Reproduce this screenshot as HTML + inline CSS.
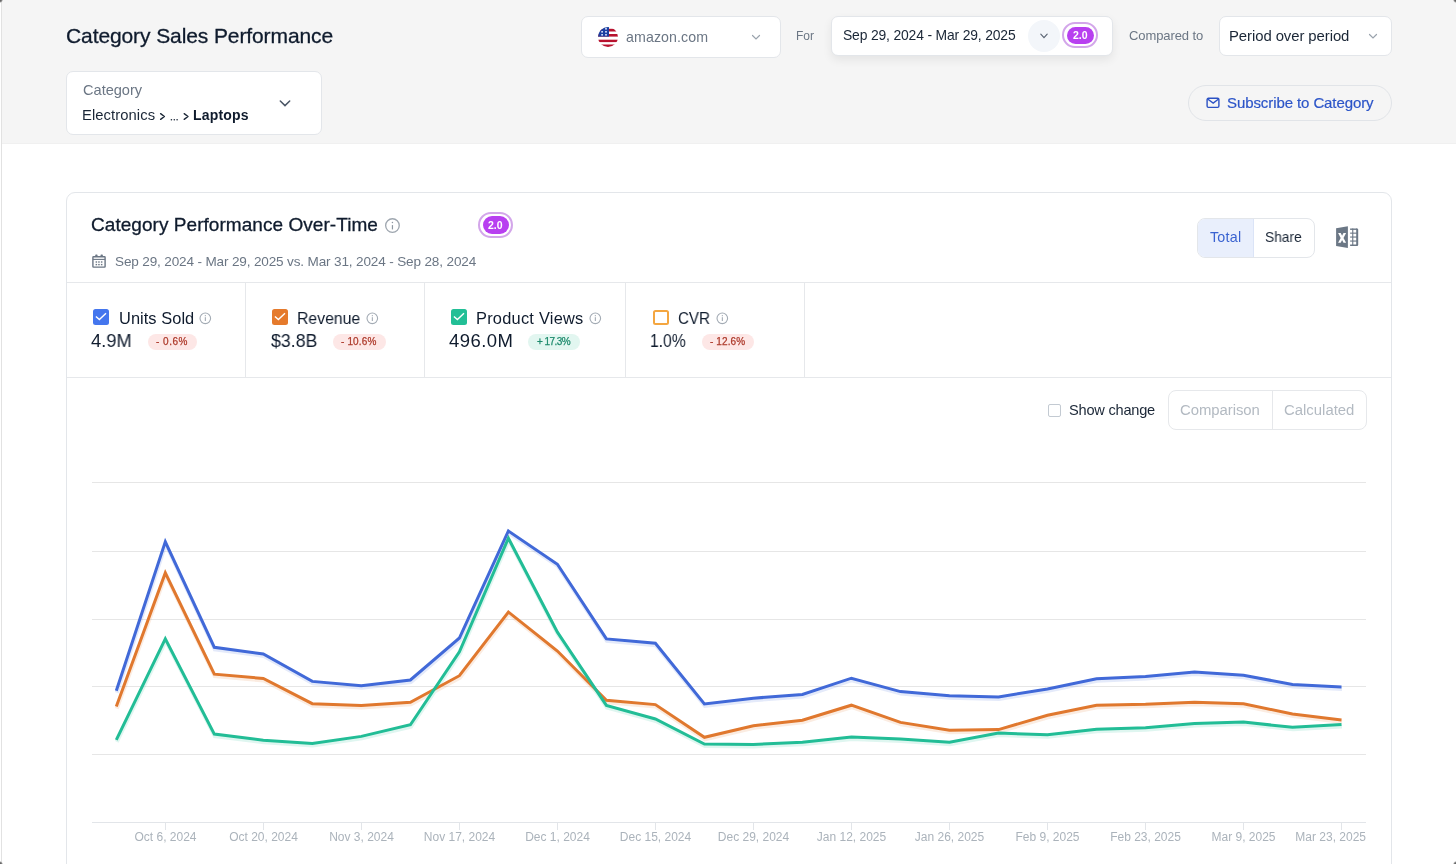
<!DOCTYPE html>
<html><head><meta charset="utf-8">
<style>
*{box-sizing:border-box;margin:0;padding:0}
html,body{width:1456px;height:864px;overflow:hidden;background:#fff}
body{font-family:"Liberation Sans",sans-serif;color:#0f1b2d;position:relative}
.a{position:absolute}
.t{position:absolute;line-height:1;white-space:nowrap;will-change:transform}
#lb{left:1px;top:0;width:1px;height:864px;background:#e2e2e2}
#hdr{left:2px;top:0;width:1454px;height:144px;background:#f5f5f5;border-bottom:1px solid #f0f0f0}
.box{position:absolute;background:#fff;border:1px solid #e3e6ea;border-radius:7px}
.g{color:#6b7684}
.chev{position:absolute}
</style></head>
<body>
<div class="a" id="hdr"></div>
<div class="a" id="lb"></div>

<!-- header title -->
<div class="t" style="left:65.6px;top:25.4px;font-size:21px;color:#0f1b2d;-webkit-text-stroke:0.3px #0f1b2d;letter-spacing:-0.1px">Category Sales Performance</div>

<!-- category dropdown -->
<div class="box" style="left:66px;top:71px;width:256px;height:64px"></div>
<div class="t g" style="left:82.50px;top:83.00px;font-size:14.6px;letter-spacing:-0.014px">Category</div>
<div class="t" style="left:82px;top:108px;font-size:14.8px;letter-spacing:0.07px;color:#1a2636">Electronics</div>
<svg class="a" style="left:150px;top:105px" width="50" height="20" viewBox="0 0 50 20"><path d="M10.6 8.6 L14.4 11.5 L10.6 14.4 M34.2 8.6 L38 11.5 L34.2 14.4" fill="none" stroke="#1a2636" stroke-width="1.35" stroke-linecap="round" stroke-linejoin="round"/><g fill="#1a2636"><circle cx="21.4" cy="14.7" r="0.8"/><circle cx="24.3" cy="14.7" r="0.8"/><circle cx="27.1" cy="14.7" r="0.8"/></g></svg>
<div class="t" style="left:193.2px;top:108px;font-size:14px;font-weight:bold;letter-spacing:0.18px;color:#0f1b2d">Laptops</div>
<svg class="a" style="left:278px;top:98px" width="14" height="10" viewBox="0 0 14 10"><path d="M2.3 3 L7 7.6 L11.7 3" fill="none" stroke="#4a5565" stroke-width="1.5" stroke-linecap="round"/></svg>

<!-- marketplace -->
<div class="box" style="left:581px;top:16px;width:200px;height:42px"></div>
<svg class="a" style="left:598px;top:27px" width="20" height="20" viewBox="0 0 20 20">
 <defs><clipPath id="fc"><circle cx="10" cy="10" r="10"/></clipPath></defs>
 <g clip-path="url(#fc)">
  <rect width="20" height="20" fill="#fff"/>
  <g fill="#b8122e">
  <rect y="1.8" width="20" height="2.7"/>
  <rect y="7" width="20" height="2.6"/>
  <rect y="12.7" width="20" height="2.4"/>
  <rect y="17.5" width="20" height="2.5"/>
  </g>
  <rect width="11" height="9.6" fill="#1b3fa0"/>
  <g fill="#dfe8ff"><rect x="3.3" y="4" width="1.6" height="1.6"/><rect x="7.2" y="4" width="1.6" height="1.6"/><rect x="3.3" y="7" width="1.6" height="1.6"/><rect x="7.2" y="7" width="1.6" height="1.6"/><rect x="7.2" y="1" width="1.6" height="1.6"/></g>
 </g>
</svg>
<div class="t g" style="left:625.80px;top:30.00px;font-size:14.2px;letter-spacing:0.100px">amazon.com</div>
<svg class="a" style="left:751px;top:33px" width="10" height="8" viewBox="0 0 10 8"><path d="M1.5 2.5 L5 6 L8.5 2.5" fill="none" stroke="#9aa3ad" stroke-width="1.2" stroke-linecap="round"/></svg>

<div class="t g" style="left:796.31px;top:30.00px;font-size:12px;transform:scaleX(0.9881);transform-origin:0 0">For</div>

<!-- date picker -->
<div class="box" style="left:831px;top:16px;width:282px;height:40px;box-shadow:0 4px 10px rgba(0,0,0,0.07)"></div>
<div class="t" style="left:843.20px;top:29.00px;font-size:13.9px;letter-spacing:-0.162px;color:#1a2636">Sep 29, 2024 - Mar 29, 2025</div>
<div class="a" style="left:1028px;top:20px;width:32px;height:32px;border-radius:50%;background:#f3f6fa"></div>
<svg class="a" style="left:1039px;top:32px" width="10" height="8" viewBox="0 0 10 8"><path d="M1.8 2.2 L5 5.6 L8.2 2.2" fill="none" stroke="#5b6573" stroke-width="1.15" stroke-linecap="round"/></svg>
<div class="a" style="left:1062px;top:22px;width:36px;height:26px;border-radius:13px;border:2px solid #d3a6ea"></div>
<div class="a" style="left:1067px;top:26.5px;width:26.5px;height:17.5px;border-radius:9px;background:#b83ff0"></div>
<div class="t" style="left:1072.5px;top:30px;font-size:10.5px;font-weight:bold;color:#fff">2.0</div>

<div class="t g" style="left:1128.60px;top:29.00px;font-size:13.0px;letter-spacing:-0.090px">Compared to</div>
<div class="box" style="left:1219px;top:16px;width:173px;height:40px"></div>
<div class="t" style="left:1229.00px;top:29.00px;font-size:14.9px;letter-spacing:-0.076px;color:#1a2636">Period over period</div>
<svg class="a" style="left:1368px;top:32px" width="10" height="8" viewBox="0 0 10 8"><path d="M1.5 2.5 L5 6 L8.5 2.5" fill="none" stroke="#9aa3ad" stroke-width="1.2" stroke-linecap="round"/></svg>

<!-- subscribe -->
<div class="a" style="left:1188px;top:85px;width:204px;height:36px;border-radius:18px;border:1px solid #e1e4e8"></div>
<svg class="a" style="left:1206px;top:97px" width="14" height="12" viewBox="0 0 14 12"><rect x="1.1" y="1.3" width="11.8" height="9.1" rx="1.3" fill="none" stroke="#2c52c4" stroke-width="1.4"/><path d="M1.6 2 L7.2 6.1 L12.6 2" fill="none" stroke="#2c52c4" stroke-width="1.3"/></svg>
<div class="t" style="left:1227px;top:94.6px;font-size:15px;color:#2c55c8;-webkit-text-stroke:0.2px #2c55c8;letter-spacing:-0.09px">Subscribe to Category</div>

<!-- card -->
<div class="box" style="left:66px;top:192px;width:1326px;height:700px;border-radius:9px"></div>
<div class="t" style="left:91px;top:215.2px;font-size:19px;color:#0f1b2d;-webkit-text-stroke:0.3px #0f1b2d;letter-spacing:0.05px">Category Performance Over-Time</div>
<svg class="a" style="left:385px;top:218px" width="15" height="16" viewBox="0 0 15 16"><circle cx="7.45" cy="7.55" r="6.8" fill="none" stroke="#9ea6af" stroke-width="1.3"/><rect x="6.85" y="7.1" width="1.2" height="4.3" fill="#8f98a2"/><circle cx="7.45" cy="4.6" r="0.75" fill="#8f98a2"/></svg>
<div class="a" style="left:478px;top:211.5px;width:35px;height:26px;border-radius:13px;border:2px solid #d3a6ea"></div>
<div class="a" style="left:482.5px;top:216.3px;width:26.5px;height:17.3px;border-radius:9px;background:#b83ff0"></div>
<div class="t" style="left:488px;top:219.8px;font-size:10.5px;font-weight:bold;color:#fff">2.0</div>

<svg class="a" style="left:88px;top:250px" width="22" height="22" viewBox="0 0 22 22"><g fill="#6b7684"><rect x="7.2" y="4.6" width="2.4" height="2.4" rx="0.8"/><rect x="12.5" y="4.6" width="2.4" height="2.4" rx="0.8"/><rect x="7.6" y="11.3" width="1.5" height="1.4"/><rect x="10.2" y="11.3" width="1.5" height="1.4"/><rect x="12.9" y="11.3" width="1.5" height="1.4"/><rect x="7.6" y="13.9" width="1.5" height="1.4"/><rect x="10.2" y="13.9" width="1.5" height="1.4"/><rect x="12.9" y="13.9" width="1.5" height="1.4"/></g><rect x="4.9" y="6.8" width="12.2" height="10.3" rx="0.6" fill="none" stroke="#6b7684" stroke-width="1.4"/><line x1="4.9" y1="9.4" x2="17.1" y2="9.4" stroke="#6b7684" stroke-width="1.1"/></svg>
<div class="t g" style="left:114.60px;top:255.00px;font-size:13.55px;letter-spacing:-0.148px">Sep 29, 2024 - Mar 29, 2025 vs. Mar 31, 2024 - Sep 28, 2024</div>

<!-- toggle total/share -->
<div class="a" style="left:1197px;top:218px;width:118px;height:40px;border-radius:8px;border:1px solid #e3e6ea;overflow:hidden;background:#fff">
  <div class="a" style="left:0;top:0;width:56px;height:38px;background:#e9effc;border-right:1px solid #dbe4f7"></div>
</div>
<div class="t" style="left:1209.90px;top:230.00px;font-size:14.3px;letter-spacing:0.225px;color:#3a63d1">Total</div>
<div class="t" style="left:1265.12px;top:230.00px;font-size:14.2px;transform:scaleX(0.9700);transform-origin:0 0;color:#1a2636">Share</div>
<svg class="a" style="left:1330px;top:220px" width="34" height="34" viewBox="0 0 34 34"><path d="M6.1 8.3 L17.9 6.3 L17.9 28.1 L6.1 26 Z" fill="#6b7785"/><path d="M8.1 13 L10.7 13 L12.1 15.8 L13.5 13 L16.1 13 L13.5 17.9 L16.1 22.8 L13.5 22.8 L12.1 20 L10.7 22.8 L8.1 22.8 L10.7 17.9 Z" fill="#fff"/><g fill="#6b7785"><rect x="20.1" y="8.5" width="7" height="1.4"/><rect x="20.1" y="12.6" width="7" height="1.1"/><rect x="20.1" y="16.5" width="7" height="1.1"/><rect x="20.1" y="20.5" width="7" height="1.1"/><rect x="20.1" y="24.5" width="7" height="1.5"/><rect x="22.2" y="8.5" width="1.1" height="17.5"/><path d="M26.2 8.5 L27 8.5 Q28.2 8.5 28.2 9.7 L28.2 24.8 Q28.2 26 27 26 L26.2 26 Z"/></g></svg>

<!-- metrics row lines -->
<div class="a" style="left:67px;top:282px;width:1324px;height:1px;background:#e6e8eb"></div>
<div class="a" style="left:67px;top:377px;width:1324px;height:1px;background:#e6e8eb"></div>
<div class="a" style="left:245px;top:283px;width:1px;height:94px;background:#e6e8eb"></div>
<div class="a" style="left:424px;top:283px;width:1px;height:94px;background:#e6e8eb"></div>
<div class="a" style="left:625px;top:283px;width:1px;height:94px;background:#e6e8eb"></div>
<div class="a" style="left:804px;top:283px;width:1px;height:94px;background:#e6e8eb"></div>

<!-- metric 1 -->
<div class="a" style="left:93px;top:309px;width:16px;height:16px;border-radius:2.5px;background:#4476ee"></div>
<svg class="a" style="left:93px;top:309px" width="16" height="16" viewBox="0 0 16 16"><path d="M2.9 7.4 L6.4 10.6 L13 4.3" fill="none" stroke="#fff" stroke-width="1.4"/></svg>
<div class="t" style="left:118.50px;top:310.00px;font-size:16.4px;letter-spacing:0.056px">Units Sold</div>
<svg class="a" style="left:199px;top:312px" width="13" height="13" viewBox="0 0 13 13"><circle cx="6.3" cy="6.3" r="5.3" fill="none" stroke="#a3abb4" stroke-width="1.1"/><rect x="5.8" y="5.2" width="1.1" height="3.8" fill="#a3abb4"/><circle cx="6.35" cy="3.7" r="0.65" fill="#a3abb4"/></svg>
<div class="t" style="left:91.31px;top:332.00px;font-size:18.5px;transform:scaleX(0.9872);transform-origin:0 0">4.9M</div>
<div class="a" style="left:148px;top:334px;width:49px;height:16px;border-radius:8px;background:#fde7e6"></div>
<div class="t" style="left:155.9px;top:337.4px;font-size:10px;-webkit-text-stroke:0.25px #ad3a2b;letter-spacing:0.5px;color:#ad3a2b">- 0.6%</div>

<!-- metric 2 -->
<div class="a" style="left:272px;top:309px;width:16px;height:16px;border-radius:2.5px;background:#e57a2c"></div>
<svg class="a" style="left:272px;top:309px" width="16" height="16" viewBox="0 0 16 16"><path d="M2.9 7.4 L6.4 10.6 L13 4.3" fill="none" stroke="#fff" stroke-width="1.4"/></svg>
<div class="t" style="left:297.35px;top:310.00px;font-size:16.4px;transform:scaleX(0.9623);transform-origin:0 0">Revenue</div>
<svg class="a" style="left:366px;top:312px" width="13" height="13" viewBox="0 0 13 13"><circle cx="6.3" cy="6.3" r="5.3" fill="none" stroke="#a3abb4" stroke-width="1.1"/><rect x="5.8" y="5.2" width="1.1" height="3.8" fill="#a3abb4"/><circle cx="6.35" cy="3.7" r="0.65" fill="#a3abb4"/></svg>
<div class="t" style="left:270.51px;top:332.00px;font-size:18.5px;transform:scaleX(0.9597);transform-origin:0 0">$3.8B</div>
<div class="a" style="left:332.7px;top:334px;width:53px;height:16px;border-radius:8px;background:#fde7e6"></div>
<div class="t" style="left:341.2px;top:337.4px;font-size:10px;-webkit-text-stroke:0.25px #ad3a2b;letter-spacing:0.15px;color:#ad3a2b">- 10.6%</div>

<!-- metric 3 -->
<div class="a" style="left:451px;top:309px;width:16px;height:16px;border-radius:2.5px;background:#22bf96"></div>
<svg class="a" style="left:451px;top:309px" width="16" height="16" viewBox="0 0 16 16"><path d="M2.9 7.4 L6.4 10.6 L13 4.3" fill="none" stroke="#fff" stroke-width="1.4"/></svg>
<div class="t" style="left:476.30px;top:310.00px;font-size:16.4px;letter-spacing:0.233px">Product Views</div>
<svg class="a" style="left:589px;top:312px" width="13" height="13" viewBox="0 0 13 13"><circle cx="6.3" cy="6.3" r="5.3" fill="none" stroke="#a3abb4" stroke-width="1.1"/><rect x="5.8" y="5.2" width="1.1" height="3.8" fill="#a3abb4"/><circle cx="6.35" cy="3.7" r="0.65" fill="#a3abb4"/></svg>
<div class="t" style="left:449.10px;top:332.00px;font-size:18.5px;letter-spacing:0.420px">496.0M</div>
<div class="a" style="left:528.4px;top:334px;width:52px;height:16px;border-radius:8px;background:#e2f6f0"></div>
<div class="t" style="left:536.8px;top:337.4px;font-size:10px;-webkit-text-stroke:0.25px #1d8a6c;letter-spacing:-0.55px;color:#1d8a6c">+ 17.3%</div>

<!-- metric 4 -->
<div class="a" style="left:653px;top:310px;width:15.5px;height:15px;border-radius:2.5px;border:2px solid #f4a640;background:#fff"></div>
<div class="t" style="left:678.26px;top:310.00px;font-size:16.4px;transform:scaleX(0.9245);transform-origin:0 0">CVR</div>
<svg class="a" style="left:716px;top:312px" width="13" height="13" viewBox="0 0 13 13"><circle cx="6.3" cy="6.3" r="5.3" fill="none" stroke="#a3abb4" stroke-width="1.1"/><rect x="5.8" y="5.2" width="1.1" height="3.8" fill="#a3abb4"/><circle cx="6.35" cy="3.7" r="0.65" fill="#a3abb4"/></svg>
<div class="t" style="left:649.72px;top:332.00px;font-size:18.5px;transform:scaleX(0.8454);transform-origin:0 0">1.0%</div>
<div class="a" style="left:702px;top:334px;width:52px;height:16px;border-radius:8px;background:#fde7e6"></div>
<div class="t" style="left:710px;top:337.4px;font-size:10px;-webkit-text-stroke:0.25px #ad3a2b;letter-spacing:0.1px;color:#ad3a2b">- 12.6%</div>

<!-- show change -->
<div class="a" style="left:1048px;top:403.5px;width:13px;height:13px;border-radius:2px;border:1.3px solid #c3cad2;background:#fff"></div>
<div class="t" style="left:1069.20px;top:403.00px;font-size:14.6px;letter-spacing:-0.220px;color:#1a2636">Show change</div>
<div class="a" style="left:1168px;top:390px;width:199px;height:40px;border-radius:8px;border:1px solid #e6e8eb"></div>
<div class="a" style="left:1272px;top:391px;width:1px;height:38px;background:#e6e8eb"></div>
<div class="t" style="left:1180.10px;top:403.00px;font-size:14.9px;letter-spacing:-0.044px;color:#b3bac2">Comparison</div>
<div class="t" style="left:1284.00px;top:403.00px;font-size:14.9px;letter-spacing:0.000px;color:#b3bac2">Calculated</div>

<!-- chart -->
<svg class="a" style="left:0;top:0;will-change:transform" width="1456" height="864" viewBox="0 0 1456 864">
 <g stroke="#e6e6e6" stroke-width="1">
  <line x1="92" y1="482.5" x2="1366" y2="482.5"/>
  <line x1="92" y1="551.5" x2="1366" y2="551.5"/>
  <line x1="92" y1="619.5" x2="1366" y2="619.5"/>
  <line x1="92" y1="686.5" x2="1366" y2="686.5"/>
  <line x1="92" y1="754.5" x2="1366" y2="754.5"/>
 </g>
 <line x1="92" y1="822.5" x2="1366" y2="822.5" stroke="#e2e5e9" stroke-width="1"/>
 <g stroke="#e2e5e9" stroke-width="1">
  <line x1="165.5" y1="822" x2="165.5" y2="830"/>
  <line x1="263.5" y1="822" x2="263.5" y2="830"/>
  <line x1="361.5" y1="822" x2="361.5" y2="830"/>
  <line x1="459.5" y1="822" x2="459.5" y2="830"/>
  <line x1="557.5" y1="822" x2="557.5" y2="830"/>
  <line x1="655.5" y1="822" x2="655.5" y2="830"/>
  <line x1="753.5" y1="822" x2="753.5" y2="830"/>
  <line x1="851.5" y1="822" x2="851.5" y2="830"/>
  <line x1="949.5" y1="822" x2="949.5" y2="830"/>
  <line x1="1047.5" y1="822" x2="1047.5" y2="830"/>
  <line x1="1145.5" y1="822" x2="1145.5" y2="830"/>
  <line x1="1243.5" y1="822" x2="1243.5" y2="830"/>
  <line x1="1341.5" y1="822" x2="1341.5" y2="830"/>
 </g>
 <g fill="none" stroke-width="4" stroke-linejoin="miter" transform="translate(0.5,2.7)" opacity="0.14"><polyline stroke="#4169d8" points="116.3,690.0 165.3,541.2 214.3,646.6 263.3,653.2 312.3,680.7 361.3,685.0 410.4,679.3 459.4,637.3 508.4,530.3 557.4,563.5 606.4,638.2 655.4,642.5 704.4,703.3 753.4,697.5 802.4,693.7 851.4,677.5 900.5,690.9 949.5,695.0 998.5,696.2 1047.5,688.2 1096.5,678.0 1145.5,675.9 1194.5,671.2 1243.5,674.6 1292.5,683.8 1341.5,686.4"/><polyline stroke="#e0782e" points="116.3,705.9 165.3,572.2 214.3,673.5 263.3,677.8 312.3,703.0 361.3,704.7 410.4,701.5 459.4,675.0 508.4,611.3 557.4,650.3 606.4,699.5 655.4,703.9 704.4,736.6 753.4,725.0 802.4,719.5 851.4,704.5 900.5,721.7 949.5,729.5 998.5,728.9 1047.5,714.6 1096.5,704.6 1145.5,703.6 1194.5,701.5 1243.5,703.1 1292.5,713.3 1341.5,719.3"/><polyline stroke="#22bd96" points="116.3,739.1 165.3,638.2 214.3,733.4 263.3,739.5 312.3,742.9 361.3,735.7 410.4,724.1 459.4,651.2 508.4,537.5 557.4,631.5 606.4,704.7 655.4,718.3 704.4,743.4 753.4,743.7 802.4,741.5 851.4,736.4 900.5,738.2 949.5,741.6 998.5,732.4 1047.5,734.1 1096.5,728.6 1145.5,727.1 1194.5,722.9 1243.5,721.4 1292.5,726.6 1341.5,723.7"/></g>
 <g fill="none" stroke-width="3" stroke-linejoin="miter" transform="translate(0,0.7)">
  <polyline stroke="#4169d8" points="116.3,690.0 165.3,541.2 214.3,646.6 263.3,653.2 312.3,680.7 361.3,685.0 410.4,679.3 459.4,637.3 508.4,530.3 557.4,563.5 606.4,638.2 655.4,642.5 704.4,703.3 753.4,697.5 802.4,693.7 851.4,677.5 900.5,690.9 949.5,695.0 998.5,696.2 1047.5,688.2 1096.5,678.0 1145.5,675.9 1194.5,671.2 1243.5,674.6 1292.5,683.8 1341.5,686.4"/>
  <polyline stroke="#e0782e" points="116.3,705.9 165.3,572.2 214.3,673.5 263.3,677.8 312.3,703.0 361.3,704.7 410.4,701.5 459.4,675.0 508.4,611.3 557.4,650.3 606.4,699.5 655.4,703.9 704.4,736.6 753.4,725.0 802.4,719.5 851.4,704.5 900.5,721.7 949.5,729.5 998.5,728.9 1047.5,714.6 1096.5,704.6 1145.5,703.6 1194.5,701.5 1243.5,703.1 1292.5,713.3 1341.5,719.3"/>
  <polyline stroke="#22bd96" points="116.3,739.1 165.3,638.2 214.3,733.4 263.3,739.5 312.3,742.9 361.3,735.7 410.4,724.1 459.4,651.2 508.4,537.5 557.4,631.5 606.4,704.7 655.4,718.3 704.4,743.4 753.4,743.7 802.4,741.5 851.4,736.4 900.5,738.2 949.5,741.6 998.5,732.4 1047.5,734.1 1096.5,728.6 1145.5,727.1 1194.5,722.9 1243.5,721.4 1292.5,726.6 1341.5,723.7"/>
 </g>
 <g font-family="Liberation Sans" font-size="12" fill="#abb3bb" text-anchor="middle">
  <text x="165.5" y="840.8">Oct 6, 2024</text>
  <text x="263.5" y="840.8">Oct 20, 2024</text>
  <text x="361.5" y="840.8">Nov 3, 2024</text>
  <text x="459.5" y="840.8">Nov 17, 2024</text>
  <text x="557.5" y="840.8">Dec 1, 2024</text>
  <text x="655.5" y="840.8">Dec 15, 2024</text>
  <text x="753.5" y="840.8">Dec 29, 2024</text>
  <text x="851.5" y="840.8">Jan 12, 2025</text>
  <text x="949.5" y="840.8">Jan 26, 2025</text>
  <text x="1047.5" y="840.8">Feb 9, 2025</text>
  <text x="1145.5" y="840.8">Feb 23, 2025</text>
  <text x="1243.5" y="840.8">Mar 9, 2025</text>
  <text x="1366" y="840.8" text-anchor="end">Mar 23, 2025</text>
 </g>
</svg>
<div class="a" style="left:0;top:0;width:3px;height:3px;background:radial-gradient(circle at 0 0,#555 0,#777 1.5px,rgba(200,200,200,0) 3px)"></div>
<div class="a" style="right:0;top:0;width:3px;height:3px;background:radial-gradient(circle at 100% 0,#555 0,#777 1.5px,rgba(200,200,200,0) 3px)"></div>
<div class="a" style="left:0;bottom:0;width:3px;height:3px;background:radial-gradient(circle at 0 100%,#555 0,#777 1.5px,rgba(200,200,200,0) 3px)"></div>
<div class="a" style="right:0;bottom:0;width:3px;height:3px;background:radial-gradient(circle at 100% 100%,#555 0,#777 1.5px,rgba(200,200,200,0) 3px)"></div>
</body></html>
